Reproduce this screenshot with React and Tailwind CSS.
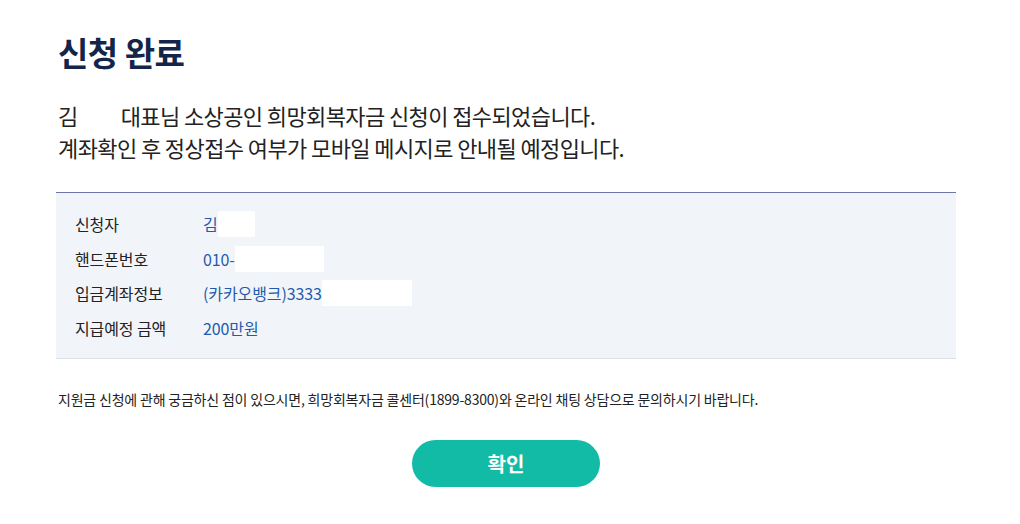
import React from 'react';

const rows = [
    { label: '신청자', value: '김', mask: 'w-[37px]' },
    { label: '핸드폰번호', value: '010-', mask: 'w-[89px]' },
    { label: '입금계좌정보', value: '(카카오뱅크)3333', mask: 'w-[90px]' },
    { label: '지급예정 금액', value: '200만원', mask: null },
];

const App = () => {
    return (
        <div className="min-h-screen bg-white font-['Noto_Sans_CJK_KR',sans-serif] text-[#222] pl-[56px] pr-[64px] pt-[28px]">
            <h1 className="text-[33px] leading-[48px] font-bold text-[#14254a] tracking-[-0.5px] pl-[2px]">신청 완료</h1>

            <div className="mt-[23px] pl-[2px] text-[22px] leading-[32px] tracking-[-0.6px] text-[#222]">
                <p className="flex">
                    <span>김</span>
                    <span className="w-[43px]"></span>
                    <span>대표님 소상공인 희망회복자금 신청이 접수되었습니다.</span>
                </p>
                <p>계좌확인 후 정상접수 여부가 모바일 메시지로 안내될 예정입니다.</p>
            </div>

            <div className="mt-[29px] w-[900px] border-t border-t-[#6d78a8] border-b border-b-[#dde2ea] bg-[#f1f5fa] pl-[19px] pt-[14px] pb-[13px]">
                {rows.map((row) => (
                    <div key={row.label} className="flex items-center h-[34.5px] text-[16px] tracking-[-0.1px]">
                        <span className="w-[128px] text-[#222]">{row.label}</span>
                        <span className="text-[#1f5bab]">{row.value}</span>
                        {row.mask && <span className={`${row.mask} h-[26px] bg-white`}></span>}
                    </div>
                ))}
            </div>

            <p className="mt-[30px] pl-[2px] text-[14px] leading-[20px] tracking-[-0.2px] text-[#222]">
                지원금 신청에 관해 궁금하신 점이 있으시면, 희망회복자금 콜센터(1899-8300)와 온라인 채팅 상담으로 문의하시기 바랍니다.
            </p>

            <div className="w-[900px] flex justify-center mt-[31px]">
                <button className="w-[188px] h-[47px] rounded-full bg-[#12bba6] text-white text-[20px] font-bold">
                    확인
                </button>
            </div>
        </div>
    );
};

export default App;
